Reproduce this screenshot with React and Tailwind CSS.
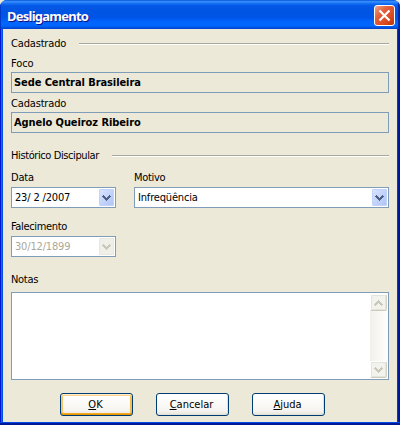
import React from "react";

function Label({ children, className = "" }) {
  return <div className={"h-[14px] shrink-0 " + className}>{children}</div>;
}

function GroupTitle({ children, width, spacing }) {
  return (
    <div className="flex h-[14px] justify-between">
      <span className={spacing}>{children}</span>
      <div className={"mt-[6px] h-[2px] border-b border-white bg-[#aca899] " + width} />
    </div>
  );
}

function ReadOnly({ children }) {
  return (
    <div className="h-[21px] border border-[#7f9db9] pt-[3px] pl-[2px] font-bold tracking-[-0.08px]">
      {children}
    </div>
  );
}

function Chevron({ color, up = false }) {
  return (
    <svg width="9" height="6" viewBox="0 0 9 6" shapeRendering="crispEdges" className={up ? "rotate-180" : ""}>
      <path
        fill={color}
        d="M1 0h1v1h-1zM7 0h1v1h-1zM0 1h3v1h-3zM6 1h3v1h-3zM1 2h3v1h-3zM5 2h3v1h-3zM2 3h5v1h-5zM3 4h3v1h-3zM4 5h1v1h-1z"
      />
    </svg>
  );
}

function Combo({ children, width, disabled = false }) {
  return (
    <div className={"flex h-[21px] justify-between border border-[#7f9db9] bg-white p-px " + width}>
      <span className={"pt-[2px] pl-[2px] tracking-[-0.17px]" + (disabled ? " text-[#aca899]" : "")}>{children}</span>
      <div
        className={
          "flex h-[17px] w-[15px] items-center justify-center rounded-[1px] border " +
          (disabled
            ? "border-[#e8e8df] bg-[#f0f0e9]"
            : "border-[#c1d2fb] bg-linear-to-br from-[#d8e3fe] to-[#afc5f5]")
        }
      >
        <Chevron color={disabled ? "#c9c7ba" : "#4d6185"} />
      </div>
    </div>
  );
}

function ScrollButton({ up = false }) {
  return (
    <div className="flex h-[17px] w-[17px] items-center justify-center rounded-[2px] border border-white border-r-[#d6d5c5] border-b-[#cccbbb] bg-[#f3f3ed] shadow-[inset_0_0_0_1px_#e5e4da]">
      <Chevron color="#c9c7ba" up={up} />
    </div>
  );
}

function Button({ hot, rest, primary = false }) {
  return (
    <button
      className={
        "flex h-[23px] w-[73px] items-start justify-center rounded-[3px] border border-[#003c74] bg-linear-to-b from-white from-10% via-[#f5f4ef] via-80% to-[#e6e3da] pt-[4px] pr-[2px] " +
        (primary
          ? "shadow-[inset_0_1px_0_#fff0cf,inset_0_2px_0_#fbd288,inset_0_-1px_0_#e59700,inset_0_-2px_0_#f3ab28,inset_2px_0_0_#fac768,inset_-2px_0_0_#f8bd50]"
          : "shadow-[inset_-1px_-1px_0_#e2dfd5]")
      }
    >
      <span>
        <u className="underline decoration-1 underline-offset-[1px]">{hot}</u>
        {rest}
      </span>
    </button>
  );
}

export default function App() {
  return (
    <div className="h-[425px] w-[400px] bg-[#ece9d8] font-['DejaVu_Sans_Condensed','DejaVu_Sans',sans-serif] text-[11px] leading-[14px] whitespace-pre text-black [font-stretch:condensed]">
      <div className="flex h-full flex-col overflow-hidden rounded-t-[7px] bg-[#0855dd]">
        <header className="flex h-[29px] shrink-0 items-start justify-between bg-[linear-gradient(to_bottom,#0453d5_0%,#3c92ff_6%,#1570f5_12%,#0458e4_20%,#0054e3_45%,#0055e8_60%,#0064fd_75%,#0067ff_87%,#0057e6_94%,#003dcc_100%)] pt-[5px] pr-[5px] pl-[7px] shadow-[inset_1px_0_0_#0038c8,inset_-2px_0_0_#0028ad]">
          <h1 className="pt-[3px] font-['Noto_Sans',sans-serif] text-[13px] leading-[16px] font-bold tracking-[-0.75px] text-white [text-shadow:1px_1px_0_#0f1089]">
            Desligamento
          </h1>
          <div className="flex h-[21px] w-[21px] items-center justify-center rounded-[3px] border border-white bg-[linear-gradient(135deg,#f0a38b_0%,#e3603c_35%,#da4a22_70%,#b83408_100%)]">
            <svg width="13" height="13" viewBox="0 0 13 13">
              <path d="M1.5 1.5l10 10M11.5 1.5l-10 10" stroke="white" strokeWidth="2.2" />
            </svg>
          </div>
        </header>
        <div className="flex grow bg-[linear-gradient(to_right,#0019cf_0,#0019cf_1px,#0f6cf0_1px,#0f6cf0_2px,#0050e0_2px,#0050e0_50%,#0038d8_50%,#0038d8_398px,#001ea0_398px,#00138c_400px)] px-[3px]">
          <main className="h-[393px] w-full bg-[#ece9d8] px-[8px] pt-[8px]">
            <GroupTitle width="w-[310px]" spacing="tracking-[-0.17px]">Cadastrado</GroupTitle>
            <Label className="mt-[6px] tracking-[-0.1px]">Foco</Label>
            <div className="h-px" />
            <ReadOnly>Sede Central Brasileira</ReadOnly>
            <Label className="mt-[4px] tracking-[-0.17px]">Cadastrado</Label>
            <div className="h-px" />
            <ReadOnly>Agnelo Queiroz Ribeiro</ReadOnly>
            <div className="h-[16px]" />
            <GroupTitle width="w-[277px]" spacing="tracking-[-0.4px]">Histórico Discipular</GroupTitle>
            <div className="mt-[8px] flex gap-[18px]">
              <div>
                <Label className="tracking-[-0.2px]">Data</Label>
                <div className="h-[2px]" />
                <Combo width="w-[105px]">{"23/ 2 /2007"}</Combo>
              </div>
              <div>
                <Label className="tracking-[-0.3px]">Motivo</Label>
                <div className="h-[2px]" />
                <Combo width="w-[255px]">Infreqüência</Combo>
              </div>
            </div>
            <Label className="mt-[12px] tracking-[-0.35px]">Falecimento</Label>
            <div className="h-[2px]" />
            <Combo width="w-[105px]" disabled>30/12/1899</Combo>
            <Label className="mt-[16px] tracking-[-0.3px]">Notas</Label>
            <div className="mt-[5px] flex h-[88px] justify-end border border-[#7f9db9] bg-white p-px">
              <div className="flex w-[17px] flex-col justify-between bg-linear-to-r from-[#f1f0ec] to-[#fefefc]">
                <ScrollButton up />
                <ScrollButton />
              </div>
            </div>
            <div className="mt-[13px] flex gap-[23px] pl-[49px]">
              <Button hot="O" rest="K" primary />
              <Button hot="C" rest="ancelar" />
              <Button hot="A" rest="juda" />
            </div>
          </main>
        </div>
        <div className="h-[3px] shrink-0 bg-[linear-gradient(to_bottom,#0046e0_0,#0046e0_1px,#001ea0_1px,#00138c_3px)]" />
      </div>
    </div>
  );
}
